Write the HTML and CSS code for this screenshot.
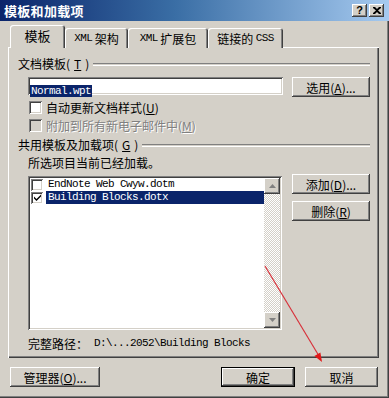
FILE: index.html
```html
<!DOCTYPE html>
<html lang="zh-CN">
<head>
  <meta charset="UTF-8">
  <title>模板和加载项</title>
  <link rel="stylesheet" href="styles.css">
</head>
<body>
  <div class="window">
    <div class="titlebar">
      <span class="title">模板和加载项</span>
      <div class="title-buttons">
        <span class="tb-btn">?</span>
        <span class="tb-btn">
          <svg width="8" height="7" viewBox="0 0 8 7"><path d="M0 0h2l2 2 2-2h2v1l-3 2.5 3 2.5v1h-2l-2-2-2 2h-2v-1l3-2.5-3-2.5z" fill="#000"/></svg>
        </span>
      </div>
    </div>

    <div class="tabs">
      <div class="tab tab-active">模板</div>
      <div class="tab tab-schema"><span class="mono">XML</span>&nbsp;架构</div>
      <div class="tab tab-pack"><span class="mono">XML</span>&nbsp;扩展包</div>
      <div class="tab tab-css">链接的&nbsp;<span class="mono">CSS</span></div>
    </div>

    <div class="panel">
      <div class="group-title">文档模板(<u>T</u>)</div>
      <div class="template-row">
        <div class="textbox"><span class="selected mono">Normal.wpt</span></div>
        <div class="btn btn-side">选用(<u>A</u>)...</div>
      </div>
      <label class="check-row">
        <span class="checkbox"></span>
        <span>自动更新文档样式(<u>U</u>)</span>
      </label>
      <label class="check-row disabled">
        <span class="checkbox"></span>
        <span>附加到所有新电子邮件中(<u>M</u>)</span>
      </label>

      <div class="group-title group-two">共用模板及加载项(<u>G</u>)</div>
      <div class="hint">所选项目当前已经加载。</div>

      <div class="addin-row">
        <div class="listbox">
          <div class="list-items">
            <div class="list-item">
              <span class="checkbox small"></span>
              <span class="item-text mono">EndNote Web Cwyw.dotm</span>
            </div>
            <div class="list-item">
              <span class="checkbox small">
                <svg width="7" height="7" viewBox="0 0 7 7"><path d="M0 2.5l2.5 2.5 4.5-4.5v2l-4.5 4.5-2.5-2.5z" fill="#000"/></svg>
              </span>
              <span class="item-text mono item-selected">Building Blocks.dotx</span>
            </div>
          </div>
          <div class="scrollbar">
            <div class="scroll-btn">
              <svg width="7" height="4" viewBox="0 0 7 4"><path d="M3.5 0l3.5 4h-7z" fill="#808080"/></svg>
            </div>
            <div class="scroll-track"></div>
            <div class="scroll-btn">
              <svg width="7" height="4" viewBox="0 0 7 4"><path d="M0 0h7l-3.5 4z" fill="#808080"/></svg>
            </div>
          </div>
        </div>
        <div class="side-buttons">
          <div class="btn btn-side">添加(<u>D</u>)...</div>
          <div class="btn btn-side">删除(<u>R</u>)</div>
        </div>
      </div>

      <div class="path-row">
        <span>完整路径：</span>
        <span class="mono path-value">D:\...2052\Building Blocks</span>
      </div>
    </div>

    <div class="footer">
      <div class="btn btn-organizer">管理器(<u>O</u>)...</div>
      <div class="btn btn-default">确定</div>
      <div class="btn btn-cancel">取消</div>
    </div>

    <!-- annotation arrow drawn over the dialog -->
    <svg class="arrow" width="389" height="398" viewBox="0 0 389 398">
      <line x1="265" y1="266" x2="319" y2="356" stroke="#d8323c" stroke-width="1.2"/>
      <polygon points="322,362 320.4,352.5 314.4,356.1" fill="#e01818"/>
    </svg>
  </div>
</body>
</html>
```

FILE: styles.css
```css
body {
  margin: 0;
  font-family: "Noto Sans CJK SC", "Liberation Sans", sans-serif;
  font-size: 12px;
  color: #000;
  background: #d4d0c8;
}
.window {
  position: relative;
  width: 389px;
  height: 398px;
  box-sizing: border-box;
  background: #d4d0c8;
  box-shadow: inset -1px -1px #404040, inset -2px -2px #808080;
  overflow: hidden;
}
.mono {
  font-family: "Liberation Mono", "Noto Sans CJK SC", monospace;
  font-size: 11px;
  letter-spacing: -0.6px;
}
u {
  text-decoration: underline;
  text-underline-offset: 1px;
}

/* title bar */
.titlebar {
  height: 21px;
  display: flex;
  align-items: center;
  justify-content: space-between;
  padding: 0 5px 0 4px;
  background: linear-gradient(90deg, #0a246a 0%, #3a6ea5 45%, #a6caf0 100%);
}
.title {
  color: #fff;
  font-weight: 700;
  font-size: 13px;
  line-height: 21px;
  letter-spacing: 0.3px;
}
.title-buttons {
  display: flex;
  gap: 2px;
}
.tb-btn {
  width: 15px;
  height: 13px;
  display: flex;
  align-items: center;
  justify-content: center;
  background: #d4d0c8;
  font-family: "Liberation Sans", sans-serif;
  font-weight: 700;
  font-size: 11px;
  line-height: 13px;
  box-shadow: inset -1px -1px #404040, inset 1px 1px #fff, inset -2px -2px #808080;
}

/* tabs */
.tabs {
  display: flex;
  align-items: flex-end;
  height: 23px;
  margin-top: 4px;
  padding-left: 10px;
}
.tab {
  height: 20px;
  display: flex;
  align-items: center;
  justify-content: center;
  box-sizing: border-box;
  border-radius: 3px 3px 0 0;
  box-shadow: inset 1px 1px #fff, inset -1px 0 #404040, inset -2px 0 #808080;
  background: #d4d0c8;
  white-space: nowrap;
}
.tab-active {
  position: relative;
  z-index: 1;
  width: 55px;
  height: 23px;
  font-size: 13px;
  padding-bottom: 2px;
}
.tab-schema { width: 63px; }
.tab-pack { width: 80px; }
.tab-css { width: 75px; }

/* main panel */
.panel {
  width: 371px;
  height: 311px;
  margin: -1px 0 0 8px;
  box-sizing: border-box;
  padding: 10px 9px 0 10px;
  display: flex;
  flex-direction: column;
  box-shadow: inset 1px 1px #fff, inset -1px -1px #404040, inset -2px -2px #808080;
}
.group-title {
  height: 14px;
  line-height: 14px;
  display: flex;
  align-items: center;
  gap: 4px;
  white-space: nowrap;
}
.group-title::after {
  content: "";
  flex: 1;
  height: 1px;
  border-top: 1px solid #808080;
  border-bottom: 1px solid #fff;
  margin-right: 0;
}
.group-two {
  margin-top: 5px;
}
.template-row {
  display: flex;
  align-items: flex-start;
  margin-top: 6px;
  height: 20px;
}
.textbox {
  width: 255px;
  height: 18px;
  margin-left: 10px;
  box-sizing: border-box;
  padding: 3px 0 0 2px;
  background: #fff;
  box-shadow: inset 1px 1px #808080, inset -1px -1px #fff, inset 2px 2px #404040, inset -2px -2px #d4d0c8;
}
.selected {
  display: inline-block;
  height: 12px;
  line-height: 12px;
  padding: 0 1px;
  background: #0a246a;
  color: #fff;
}
.btn {
  height: 20px;
  display: flex;
  align-items: center;
  justify-content: center;
  box-sizing: border-box;
  background: #d4d0c8;
  white-space: nowrap;
  box-shadow: inset -1px -1px #404040, inset 1px 1px #fff, inset -2px -2px #808080;
}
.btn-side {
  width: 78px;
  margin-left: auto;
}
.check-row {
  display: flex;
  align-items: center;
  gap: 4px;
  height: 16px;
  margin: 2px 0 0 11px;
}
.checkbox {
  width: 13px;
  height: 13px;
  flex: none;
  display: flex;
  align-items: center;
  justify-content: center;
  background: #fff;
  box-shadow: inset 1px 1px #808080, inset -1px -1px #fff, inset 2px 2px #404040, inset -2px -2px #d4d0c8;
}
.disabled {
  color: #808080;
  text-shadow: 1px 1px #fff;
}
.disabled .checkbox {
  background: #d4d0c8;
}
.hint {
  height: 14px;
  line-height: 14px;
  margin: 4px 0 0 10px;
}

/* add-in list */
.addin-row {
  display: flex;
  margin-top: 4px;
  height: 156px;
}
.listbox {
  width: 254px;
  height: 154px;
  margin: 2px 0 0 10px;
  box-sizing: border-box;
  padding: 2px;
  display: flex;
  background: #fff;
  box-shadow: inset 1px 1px #808080, inset -1px -1px #fff, inset 2px 2px #404040, inset -2px -2px #d4d0c8;
}
.list-items {
  flex: 1;
  display: flex;
  flex-direction: column;
}
.list-item {
  display: flex;
  align-items: center;
  height: 13px;
  padding-left: 1px;
}
.checkbox.small {
  width: 12px;
  height: 12px;
}
.item-text {
  flex: 1;
  height: 13px;
  line-height: 13px;
  margin-left: 3px;
  padding-left: 2px;
}
.item-selected {
  background: #0a246a;
  color: #fff;
}
.scrollbar {
  width: 16px;
  display: flex;
  flex-direction: column;
}
.scroll-btn {
  height: 16px;
  display: flex;
  align-items: center;
  justify-content: center;
  background: #d4d0c8;
  box-shadow: inset -1px -1px #404040, inset 1px 1px #fff, inset -2px -2px #808080;
}
.scroll-track {
  flex: 1;
  background-color: #fff;
  background-image: repeating-conic-gradient(#d4d0c8 0 25%, #fff 0 50%);
  background-size: 2px 2px;
}
.side-buttons {
  display: flex;
  flex-direction: column;
  gap: 7px;
  margin-left: auto;
}
.path-row {
  display: flex;
  align-items: center;
  height: 14px;
  margin: 6px 0 0 10px;
  white-space: nowrap;
}
.path-value {
  margin-left: 6px;
}

/* footer */
.footer {
  display: flex;
  margin-top: 9px;
  padding: 0 11px 0 10px;
}
.btn-organizer {
  width: 90px;
}
.btn-default {
  width: 74px;
  margin-left: auto;
  border: 1px solid #000;
}
.btn-cancel {
  width: 73px;
  margin-left: 10px;
}
.arrow {
  position: absolute;
  left: 0;
  top: 0;
  pointer-events: none;
}
```
